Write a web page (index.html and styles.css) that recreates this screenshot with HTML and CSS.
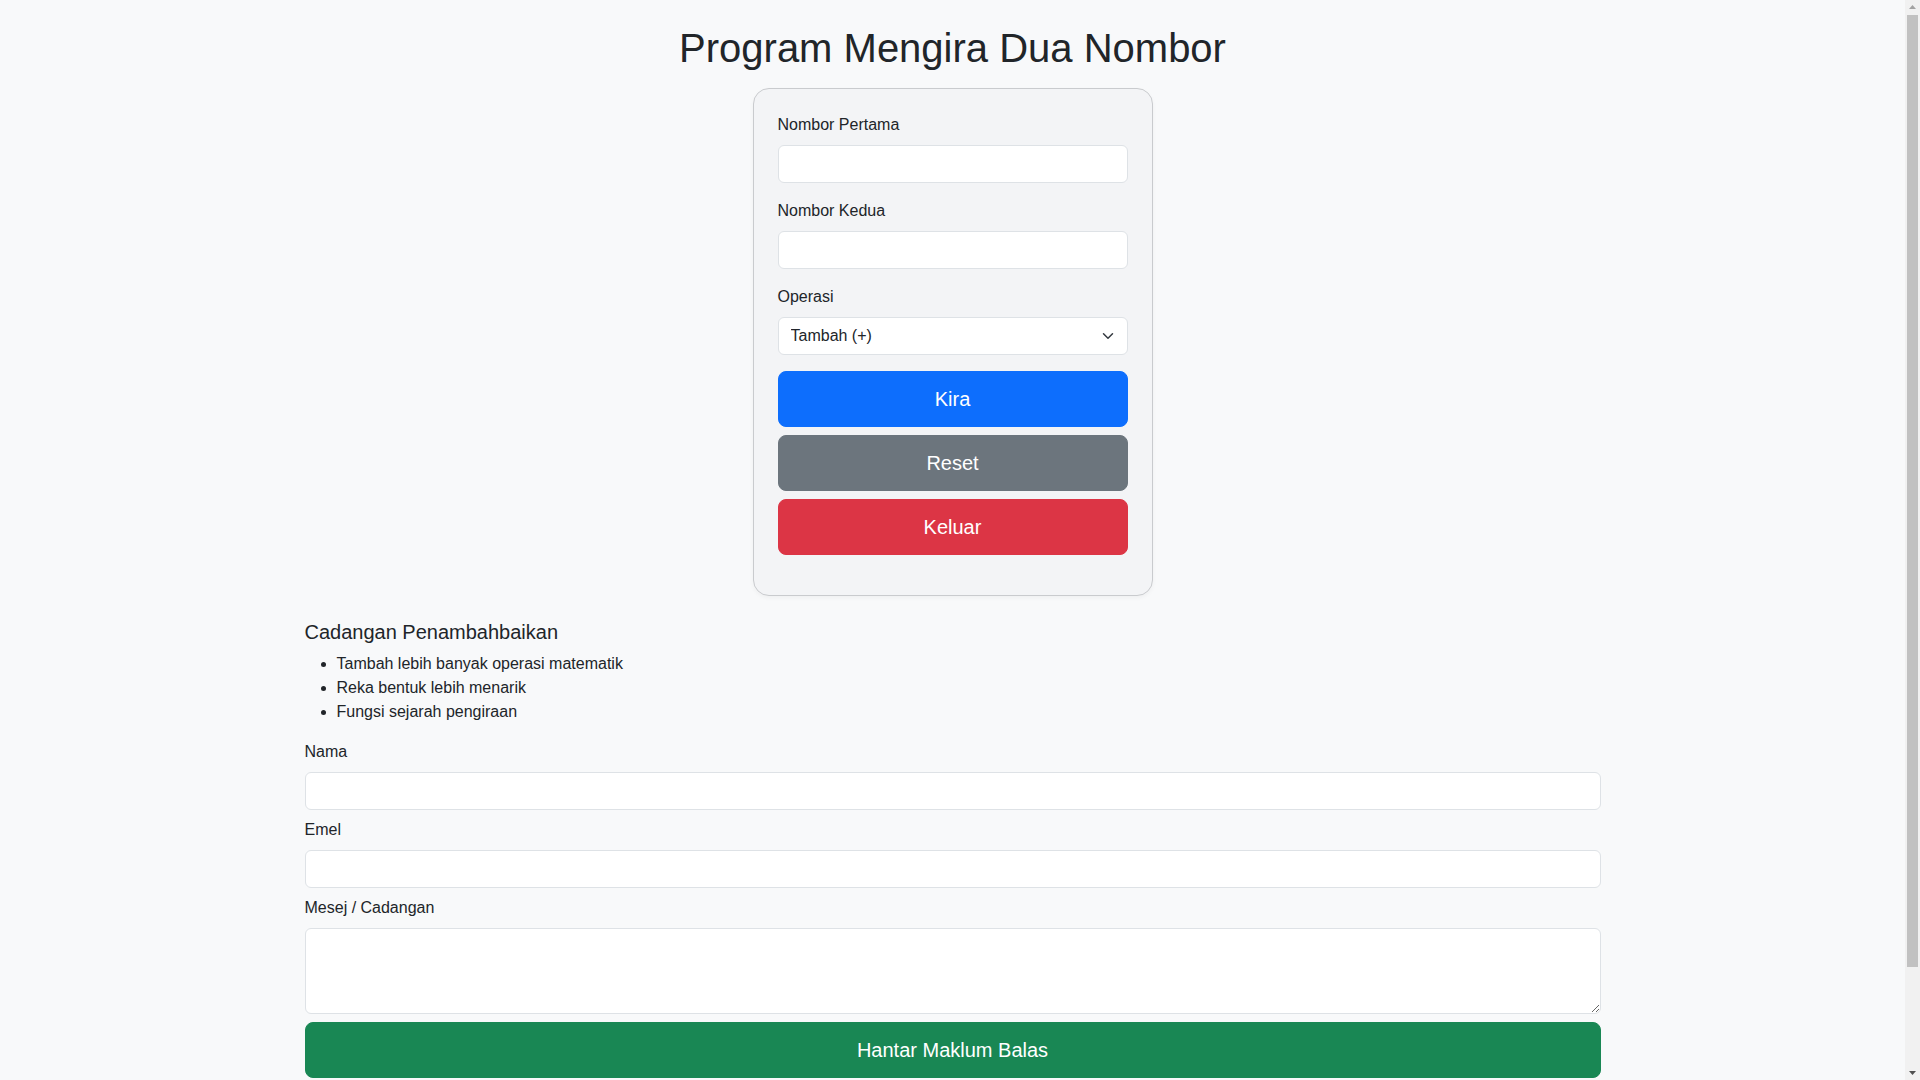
FILE: index.html
```html
<!DOCTYPE html>
<html lang="ms">
<head>
    <meta charset="UTF-8">
    <meta name="viewport" content="width=device-width, initial-scale=1.0">
    <title>Program Mengira Dua Nombor</title>
    <link rel="stylesheet" href="styles.css">
</head>
<body>
    <div class="container">
        <h1>Program Mengira Dua Nombor</h1>

        <div class="card">
            <div class="field">
                <label for="nombor1">Nombor Pertama</label>
                <input type="number" id="nombor1" name="nombor1">
            </div>
            <div class="field">
                <label for="nombor2">Nombor Kedua</label>
                <input type="number" id="nombor2" name="nombor2">
            </div>
            <div class="field">
                <label for="operasi">Operasi</label>
                <div class="select-wrap">
                    <select id="operasi" name="operasi">
                        <option value="tambah">Tambah (+)</option>
                        <option value="tolak">Tolak (-)</option>
                        <option value="darab">Darab (×)</option>
                        <option value="bahagi">Bahagi (÷)</option>
                    </select>
                    <svg class="chevron" width="16" height="12" viewBox="0 0 16 16">
                        <path d="M2 5l6 6 6-6" fill="none" stroke="#343a40" stroke-width="2" stroke-linecap="round" stroke-linejoin="round"/>
                    </svg>
                </div>
            </div>
            <button type="button" class="btn btn-primary">Kira</button>
            <button type="button" class="btn btn-secondary">Reset</button>
            <button type="button" class="btn btn-danger btn-last">Keluar</button>
        </div>

        <div class="cadangan">
            <h5>Cadangan Penambahbaikan</h5>
            <ul>
                <li>Tambah lebih banyak operasi matematik</li>
                <li>Reka bentuk lebih menarik</li>
                <li>Fungsi sejarah pengiraan</li>
            </ul>
        </div>

        <form class="maklum-balas">
            <label for="nama">Nama</label>
            <input type="text" id="nama" name="nama">

            <label for="emel">Emel</label>
            <input type="email" id="emel" name="emel">

            <label for="mesej">Mesej / Cadangan</label>
            <textarea id="mesej" name="mesej" rows="3"></textarea>

            <button type="submit" class="btn btn-success">Hantar Maklum Balas</button>
        </form>
    </div>

    <!-- bar skrol tiruan, sama seperti tangkapan skrin -->
    <div class="scrollbar">
        <svg class="arrow arrow-up" width="15" height="15" viewBox="0 0 15 15"><path d="M4 9h7l-3.5-4z" fill="#a3a3a3"/></svg>
        <div class="thumb"></div>
        <svg class="arrow arrow-down" width="15" height="15" viewBox="0 0 15 15"><path d="M4 6h7l-3.5 4z" fill="#505050"/></svg>
    </div>
</body>
</html>
```

FILE: styles.css
```css
body {
    margin: 0 15px 0 0;
    background-color: #f8f9fa;
    color: #212529;
    font-family: "Liberation Sans", Arial, sans-serif;
    font-size: 16px;
    line-height: 1.5;
}
.container {
    max-width: 1296px;
    margin: 0 auto;
    padding: 0 12px 112px;
}
h1 {
    text-align: center;
    font-size: 40px;
    font-weight: 500;
    line-height: 1.2;
    margin: 24px 0 16px;
}
.card {
    width: 400px;
    box-sizing: border-box;
    margin: 0 auto;
    padding: 24px;
    background-color: #f3f4f6;
    border: 1px solid #c9cbce;
    border-radius: 16px;
    box-shadow: 0 2px 4px rgba(0, 0, 0, 0.04);
}
.field {
    margin-bottom: 16px;
}
label {
    display: block;
    margin-bottom: 8px;
}
input,
select,
textarea {
    display: block;
    width: 100%;
    box-sizing: border-box;
    padding: 6px 12px;
    font-family: inherit;
    font-size: 16px;
    line-height: 24px;
    color: #212529;
    background-color: #fff;
    border: 1px solid #dee2e6;
    border-radius: 6px;
    margin: 0;
}
select {
    appearance: none;
    -webkit-appearance: none;
    padding-right: 36px;
}
.select-wrap {
    position: relative;
}
.chevron {
    position: absolute;
    right: 12px;
    top: 13px;
    width: 16px;
    height: 12px;
    pointer-events: none;
}
textarea {
    resize: vertical;
}
.btn {
    display: block;
    width: 100%;
    padding: 12px 16px;
    font-family: inherit;
    font-size: 20px;
    line-height: 30px;
    color: #fff;
    border: 1px solid transparent;
    border-radius: 8px;
    cursor: pointer;
    margin-bottom: 8px;
}
.btn-last {
    margin-bottom: 16px;
}
.btn-primary {
    background-color: #0d6efd;
    border-color: #0d6efd;
}
.btn-secondary {
    background-color: #6c757d;
    border-color: #6c757d;
}
.btn-danger {
    background-color: #dc3545;
    border-color: #dc3545;
}
.btn-success {
    background-color: #198754;
    border-color: #198754;
}
.btn:hover {
    opacity: 0.9;
}
.cadangan {
    margin-top: 24px;
}
h5 {
    font-size: 20px;
    font-weight: 500;
    line-height: 1.2;
    margin: 0 0 8px;
}
ul {
    margin: 0 0 16px;
    padding-left: 32px;
}
.maklum-balas input,
.maklum-balas textarea {
    margin-bottom: 8px;
}
.maklum-balas textarea {
    height: 86px;
}
.scrollbar {
    position: fixed;
    top: 0;
    right: 0;
    bottom: 0;
    width: 15px;
    background-color: #f1f1f1;
    display: flex;
    flex-direction: column;
    align-items: center;
}
.arrow {
    flex: none;
}
.thumb {
    width: 11px;
    height: 952px;
    margin-bottom: auto;
    background-color: #c1c1c1;
}
```
